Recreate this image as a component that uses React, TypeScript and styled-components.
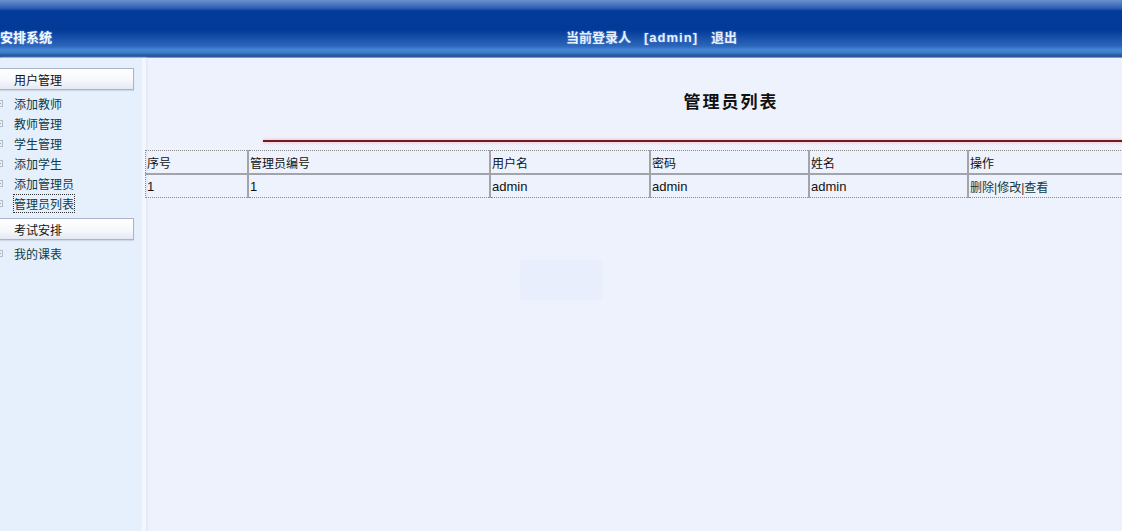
import React from 'react';
import styled, { createGlobalStyle } from 'styled-components';

const GlobalStyle = createGlobalStyle`
  html, body {
    margin: 0;
    padding: 0;
    overflow: hidden;
    background: #eef2fd;
    font-family: "Liberation Sans", "Noto Sans CJK SC", sans-serif;
    font-size: 12px;
  }
`;

const Page = styled.div`
  width: 1316px;
  height: 531px;
  display: flex;
  flex-direction: column;
`;

const Header = styled.div`
  height: 58px;
  flex: none;
  display: flex;
  align-items: center;
  padding-top: 14px;
  box-sizing: border-box;
  background: linear-gradient(
    to bottom,
    #6a92cc 0px,
    #2e5fb2 8px,
    #043b9b 11px,
    #023a98 30px,
    #2c66ba 46px,
    #4689d4 50px,
    #3a7acb 53px,
    #2a5a9c 55px,
    #2a5a9c 57px,
    #c8d8f0 58px
  );
`;

const Brand = styled.div`
  width: 566px;
  color: #f4f8ff;
  font-weight: bold;
  font-size: 13px;
  text-shadow: 0 0 2px #6ea0e8;
`;

const UserInfo = styled.div`
  display: flex;
  align-items: baseline;
  gap: 13px;
  color: #e6efff;
  font-weight: bold;
  font-size: 13px;
  text-shadow: 0 0 2px #5c90d8;
`;

const UserName = styled.span`
  letter-spacing: 1px;
`;

const Body = styled.div`
  flex: 1;
  display: flex;
`;

const Sidebar = styled.div`
  width: 146px;
  flex: none;
  background: #e6effc;
  padding-top: 10px;
  box-sizing: border-box;
  border-right: 4px solid #f4f7fe;
  box-shadow: 1px 0 2px #dbe4f4;
`;

const SectionBox = styled.div<{ $top?: number }>`
  margin-left: -10px;
  margin-top: ${(p) => p.$top ?? 0}px;
  width: 144px;
  height: 22px;
  box-sizing: border-box;
  padding-left: 23px;
  display: flex;
  align-items: center;
  font-size: 12px;
  color: #111;
  border: 1px solid #a9b5c9;
  background: linear-gradient(to bottom, #ffffff 0%, #f6f8fc 55%, #e3e9f3 100%);
  box-shadow: 0 1px 1px #d0d8e6;
`;

const MenuList = styled.ul<{ $top: number }>`
  list-style: none;
  margin: ${(p) => p.$top}px 0 0 0;
  padding: 0;
`;

const MenuItem = styled.li`
  height: 20px;
  display: flex;
  align-items: center;
  color: #0c3b48;
  font-size: 12px;
`;

const Bullet = styled.span`
  width: 7px;
  height: 7px;
  margin-left: -4px;
  margin-right: 11px;
  border: 1px solid #b4bcc8;
  box-sizing: border-box;
  position: relative;
  &::after {
    content: '';
    position: absolute;
    left: 1px;
    right: 1px;
    top: 2px;
    height: 1px;
    background: #a0a8b4;
  }
`;

const Label = styled.span<{ $active?: boolean }>`
  outline: ${(p) => (p.$active ? '1px dotted #333' : 'none')};
`;

const Main = styled.div`
  flex: 1;
  padding-top: 33px;
`;

const Title = styled.h1`
  margin: 0;
  text-align: center;
  font-size: 17px;
  line-height: 24px;
  font-weight: bold;
  letter-spacing: 2px;
  color: #111;
`;

const RedRule = styled.div`
  width: 80%;
  margin: 25px auto 0;
  height: 2px;
  background: #6e1c1c;
  box-shadow: 0 -1px 3px #f6c4d0, 0 1px 3px #f6c4d0;
`;

const Table = styled.table`
  margin: 8px 0 0 -1px;
  width: 100%;
  table-layout: fixed;
  border-collapse: collapse;
  border: 1px dotted #8a8a8a;
  font-size: 12px;
`;

const Th = styled.th<{ $w?: number }>`
  width: ${(p) => (p.$w ? `${p.$w}px` : 'auto')};
  text-align: left;
  font-weight: normal;
  color: #111;
  height: 22px;
  padding: 0 1px;
  white-space: nowrap;
  border-bottom: 2px solid #a2a4ac;
  & + & {
    border-left: 2px solid #a2a4ac;
  }
`;

const Td = styled.td`
  height: 22px;
  padding: 0 1px;
  color: #111;
  font-size: 13px;
  white-space: nowrap;
  & + & {
    border-left: 2px solid #a2a4ac;
  }
`;

const ActionLink = styled.a`
  color: #0c3b48;
  text-decoration: none;
  font-size: 12px;
`;

const Sep = styled.span`
  color: #333;
  font-size: 12px;
`;

const GhostBox = styled.div`
  margin: 62px 0 0 374px;
  width: 82px;
  height: 40px;
  background: #e8eefb;
  box-shadow: 0 0 3px #e9effb;
`;

const menu1 = ['添加教师', '教师管理', '学生管理', '添加学生', '添加管理员', '管理员列表'];

export default function App() {
  return (
    <Page>
      <GlobalStyle />
      <Header>
        <Brand>安排系统</Brand>
        <UserInfo>
          <span>当前登录人</span>
          <UserName>[admin]</UserName>
          <span>退出</span>
        </UserInfo>
      </Header>
      <Body>
        <Sidebar>
          <SectionBox>用户管理</SectionBox>
          <MenuList $top={3}>
            {menu1.map((m) => (
              <MenuItem key={m}>
                <Bullet />
                <Label $active={m === '管理员列表'}>{m}</Label>
              </MenuItem>
            ))}
          </MenuList>
          <SectionBox $top={5}>考试安排</SectionBox>
          <MenuList $top={3}>
            <MenuItem>
              <Bullet />
              <Label>我的课表</Label>
            </MenuItem>
          </MenuList>
        </Sidebar>
        <Main>
          <Title>管理员列表</Title>
          <RedRule />
          <Table>
            <thead>
              <tr>
                <Th $w={99}>序号</Th>
                <Th $w={238}>管理员编号</Th>
                <Th $w={156}>用户名</Th>
                <Th $w={155}>密码</Th>
                <Th $w={155}>姓名</Th>
                <Th>操作</Th>
              </tr>
            </thead>
            <tbody>
              <tr>
                <Td>1</Td>
                <Td>1</Td>
                <Td>admin</Td>
                <Td>admin</Td>
                <Td>admin</Td>
                <Td>
                  <ActionLink href="#">删除</ActionLink>
                  <Sep>|</Sep>
                  <ActionLink href="#">修改</ActionLink>
                  <Sep>|</Sep>
                  <ActionLink href="#">查看</ActionLink>
                </Td>
              </tr>
            </tbody>
          </Table>
          <GhostBox />
        </Main>
      </Body>
    </Page>
  );
}
